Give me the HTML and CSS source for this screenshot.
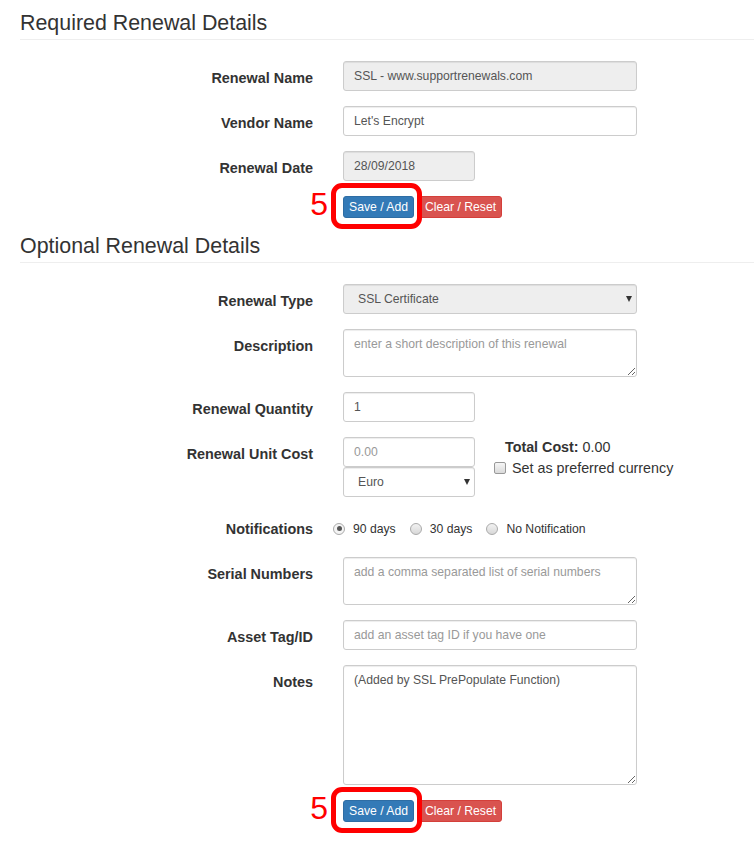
FILE: index.html
```html
<!DOCTYPE html>
<html lang="en">
<head>
<meta charset="utf-8">
<title>Renewal Details</title>
<link rel="stylesheet" href="styles.css">
</head>
<body>
<div class="page">
  <h3 class="section-title section-title--first">Required Renewal Details</h3>

  <div class="form-row">
    <label class="form-label">Renewal Name</label>
    <input class="field" type="text" value="SSL - www.supportrenewals.com" readonly>
  </div>
  <div class="form-row">
    <label class="form-label">Vendor Name</label>
    <input class="field" type="text" value="Let's Encrypt">
  </div>
  <div class="form-row">
    <label class="form-label">Renewal Date</label>
    <input class="field field--narrow" type="text" value="28/09/2018" readonly>
  </div>
  <div class="form-row">
    <div class="actions">
      <button class="btn btn--primary" type="button">Save / Add</button>
      <button class="btn btn--danger" type="button">Clear / Reset</button>
      <span class="callout"></span>
      <span class="callout-num">5</span>
    </div>
  </div>

  <h3 class="section-title">Optional Renewal Details</h3>

  <div class="form-row">
    <label class="form-label">Renewal Type</label>
    <div class="select-wrap">
      <select class="field field--select field--grey"><option>SSL Certificate</option></select>
    </div>
  </div>
  <div class="form-row">
    <label class="form-label">Description</label>
    <textarea class="field field--area" placeholder="enter a short description of this renewal"></textarea>
  </div>
  <div class="form-row">
    <label class="form-label">Renewal Quantity</label>
    <input class="field field--narrow" type="text" value="1">
  </div>
  <div class="form-row form-row--cost">
    <label class="form-label">Renewal Unit Cost</label>
    <div class="cost-fields">
      <input class="field" type="text" placeholder="0.00">
      <div class="select-wrap">
        <select class="field field--select"><option>Euro</option></select>
      </div>
    </div>
    <div class="cost-extra">
      <div class="total"><b>Total Cost:</b> 0.00</div>
      <div class="pref">
        <span class="checkbox"></span>
        <span>Set as preferred currency</span>
      </div>
    </div>
  </div>
  <div class="form-row">
    <label class="form-label">Notifications</label>
    <div class="radio-group">
      <span class="radio-option"><span class="radio radio--checked"></span>90 days</span>
      <span class="radio-option"><span class="radio"></span>30 days</span>
      <span class="radio-option"><span class="radio"></span>No Notification</span>
    </div>
  </div>
  <div class="form-row">
    <label class="form-label">Serial Numbers</label>
    <textarea class="field field--area" placeholder="add a comma separated list of serial numbers"></textarea>
  </div>
  <div class="form-row">
    <label class="form-label">Asset Tag/ID</label>
    <input class="field" type="text" placeholder="add an asset tag ID if you have one">
  </div>
  <div class="form-row">
    <label class="form-label">Notes</label>
    <textarea class="field field--area field--notes">(Added by SSL PrePopulate Function)</textarea>
  </div>
  <div class="form-row">
    <div class="actions">
      <button class="btn btn--primary" type="button">Save / Add</button>
      <button class="btn btn--danger" type="button">Clear / Reset</button>
      <span class="callout"></span>
      <span class="callout-num">5</span>
    </div>
  </div>
</div>
</body>
</html>
```
FILE: styles.css
```css
* { box-sizing: border-box; }

body {
  margin: 0;
  font-family: "Liberation Sans", Arial, sans-serif;
  font-size: 14.3px;
  line-height: 20px;
  color: #333;
  background: #fff;
}

.page {
  padding-left: 20px;
}

.section-title {
  margin: 17px 0 21px;
  padding-bottom: 4px;
  border-bottom: 1px solid #eee;
  font-size: 21.4px;
  font-weight: normal;
  line-height: 23px;
  color: #333;
}

.section-title--first {
  margin-top: 12px;
}

.form-row {
  display: grid;
  grid-template-columns: 293px 294px;
  column-gap: 30px;
  margin-bottom: 15px;
}

.form-row--cost {
  grid-template-columns: 293px 132px auto;
}

.form-label {
  text-align: right;
  font-weight: bold;
  font-size: 14.4px;
  padding-top: 7px;
}

.field {
  display: block;
  width: 100%;
  height: 30px;
  margin: 0;
  padding: 5px 10px;
  font-family: "Liberation Sans", Arial, sans-serif;
  font-size: 12.2px;
  line-height: 18px;
  color: #555;
  background: #fff;
  border: 1px solid #ccc;
  border-radius: 3px;
  box-shadow: inset 0 1px 1px rgba(0, 0, 0, .075);
  outline: none;
}

.field::placeholder {
  color: #999;
  opacity: 1;
}

.field[readonly] {
  background: #eee;
}

.field--narrow {
  width: 132px;
}

.field--area {
  height: 48px;
  resize: vertical;
}

.field--notes {
  height: 120px;
}

.field--select {
  -webkit-appearance: none;
  appearance: none;
  padding: 5px 20px 5px 14px;
}

.field--grey {
  background: #eee;
}

.select-wrap {
  position: relative;
}

.select-wrap::after {
  content: "";
  position: absolute;
  right: 5px;
  top: 12px;
  border-left: 3px solid transparent;
  border-right: 3px solid transparent;
  border-top: 6px solid #333;
  pointer-events: none;
}

.cost-fields {
  display: flex;
  flex-direction: column;
}

.cost-extra {
  display: flex;
  flex-direction: column;
}

.total {
  line-height: 20px;
}

.pref {
  display: flex;
  align-items: center;
  gap: 6px;
  margin-top: 1px;
  margin-left: -11px;
  line-height: 20px;
}

.checkbox {
  width: 12px;
  height: 12px;
  border: 1px solid #999;
  border-radius: 2px;
  background: linear-gradient(#f6f6f6, #dadada);
}

.radio-group {
  display: flex;
  align-items: center;
  height: 30px;
  padding-top: 3px;
  margin-left: -10px;
  font-size: 12.2px;
  color: #333;
}

.radio-option {
  display: flex;
  align-items: center;
  gap: 8px;
  margin-right: 14px;
}

.radio {
  position: relative;
  width: 12px;
  height: 12px;
  border: 1px solid #aaa;
  border-radius: 50%;
  background: linear-gradient(#f2f2f2, #d8d8d8);
}

.radio--checked {
  background: #f4f4f4;
}

.radio--checked::after {
  content: "";
  position: absolute;
  left: 2.5px;
  top: 2.5px;
  width: 5px;
  height: 5px;
  border-radius: 50%;
  background: #555;
}

.actions {
  grid-column: 2;
  position: relative;
  display: flex;
  gap: 5px;
}

.btn {
  margin: 0;
  padding: 1px 5px;
  font-family: "Liberation Sans", Arial, sans-serif;
  font-size: 12.2px;
  line-height: 18px;
  color: #fff;
  border: 1px solid transparent;
  border-radius: 3px;
}

.btn--primary {
  background: #337ab7;
  border-color: #2e6da4;
}

.btn--danger {
  background: #d9534f;
  border-color: #d43f3a;
}

.callout {
  position: absolute;
  left: -12px;
  top: -13px;
  width: 91px;
  height: 46px;
  border: 5px solid #f00;
  border-radius: 11px;
  pointer-events: none;
}

.callout-num {
  position: absolute;
  right: calc(100% + 15px);
  top: -8px;
  font-size: 32px;
  line-height: 32px;
  color: #f00;
}
```
